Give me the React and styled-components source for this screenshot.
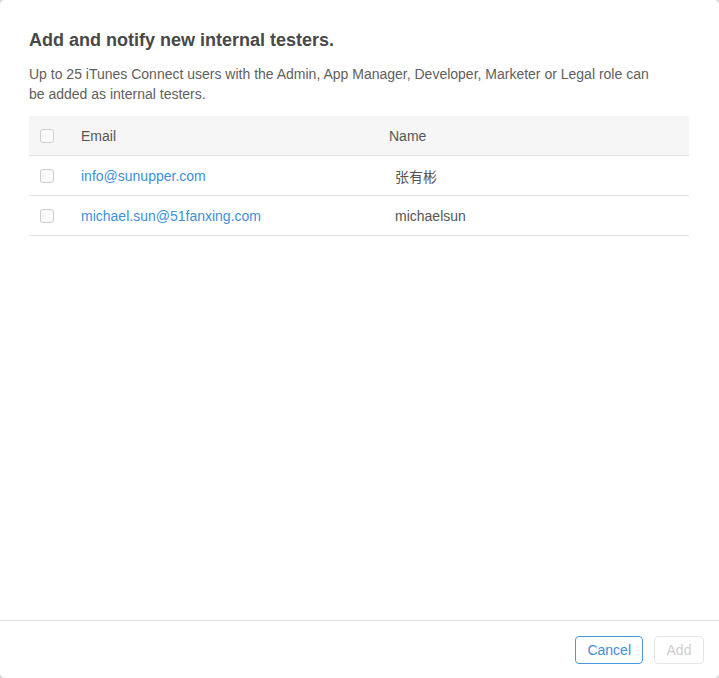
import React from "react";
import styled, { createGlobalStyle } from "styled-components";

const Global = createGlobalStyle`
  html, body { margin: 0; padding: 0; background: #d8d8d8; }
  body { font-family: "Liberation Sans", Arial, "Noto Sans CJK SC", sans-serif; }
  * { box-sizing: border-box; }
`;

const Modal = styled.div`
  width: 719px;
  height: 678px;
  background: #fff;
  border-radius: 5px;
  display: flex;
  flex-direction: column;
  overflow: hidden;
`;

const Body = styled.div`
  flex: 1;
  padding: 29px 30px 0 29px;
`;

const Title = styled.h1`
  margin: 0;
  font-size: 18px;
  font-weight: bold;
  color: #484848;
  line-height: 22px;
`;

const Desc = styled.p`
  margin: 13px 0 0;
  max-width: 632px;
  font-size: 14px;
  line-height: 20px;
  color: #606060;
`;

const Table = styled.div`
  margin-top: 12px;
  display: flex;
  flex-direction: column;
`;

const Row = styled.div`
  display: grid;
  grid-template-columns: 41px ${(p) => (p.$head ? "308px" : "314px")} 1fr;
  align-items: center;
  height: 40px;
  border-bottom: 1px solid #e3e3e3;
  background: ${(p) => (p.$head ? "#f6f6f6" : "#fff")};
  padding-left: 11px;
  font-size: 14px;
`;

const Check = styled.span`
  display: block;
  width: 14px;
  height: 14px;
  border: 1px solid #cfcfcf;
  border-radius: 3px;
  background: #fafafa;
`;

const HeadCell = styled.span`
  color: #555;
`;

const Link = styled.a`
  color: #3d8fd8;
  text-decoration: none;
`;

const NameCell = styled.span`
  color: #555;
`;

const Footer = styled.div`
  height: 58px;
  border-top: 1px solid #e3e3e3;
  display: flex;
  justify-content: flex-end;
  align-items: flex-start;
  gap: 11px;
  padding: 15px 15px 0 0;
`;

const Button = styled.button`
  height: 28px;
  padding: 0 11px;
  min-width: ${(p) => (p.$disabled ? "50px" : "66px")};
  font-family: inherit;
  font-size: 14px;
  background: #fff;
  border-radius: 4px;
  border: 1px solid ${(p) => (p.$disabled ? "#e6e6e6" : "#4a98dc")};
  color: ${(p) => (p.$disabled ? "#cfcfcf" : "#3d8fd8")};
  cursor: ${(p) => (p.$disabled ? "default" : "pointer")};
`;

const users = [
  { email: "info@sunupper.com", name: "张有彬" },
  { email: "michael.sun@51fanxing.com", name: "michaelsun" },
];

export default function App() {
  return (
    <>
      <Global />
      <Modal>
        <Body>
          <Title>Add and notify new internal testers.</Title>
          <Desc>
            Up to 25 iTunes Connect users with the Admin, App Manager, Developer, Marketer or Legal role can be added as internal testers.
          </Desc>
          <Table>
            <Row $head>
              <Check />
              <HeadCell>Email</HeadCell>
              <HeadCell>Name</HeadCell>
            </Row>
            {users.map((u) => (
              <Row key={u.email}>
                <Check />
                <Link href="#">{u.email}</Link>
                <NameCell>{u.name}</NameCell>
              </Row>
            ))}
          </Table>
        </Body>
        <Footer>
          <Button>Cancel</Button>
          <Button $disabled disabled>Add</Button>
        </Footer>
      </Modal>
    </>
  );
}
